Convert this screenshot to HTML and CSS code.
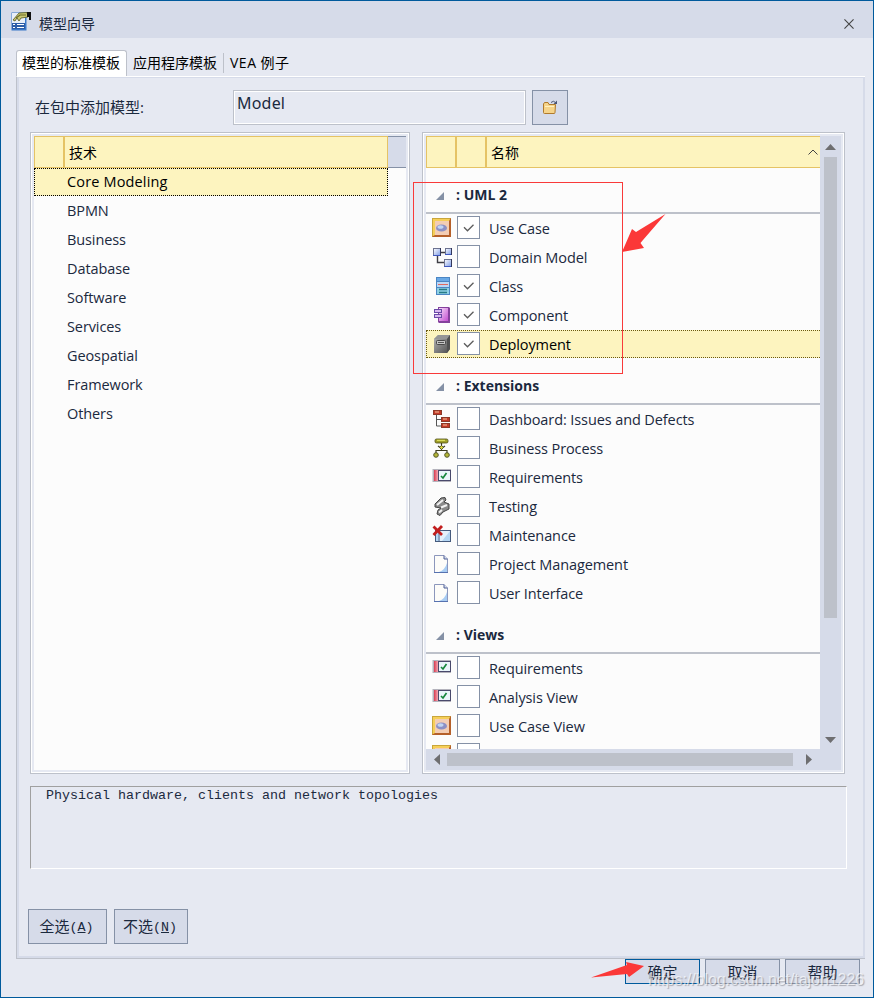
FILE: index.html
```html
<!DOCTYPE html>
<html lang="zh-CN">
<head>
    <meta charset="UTF-8">
    <meta name="viewport" content="width=device-width, initial-scale=1.0">
    <title>模型向导</title>
    <link rel="stylesheet" href="styles.css">
</head>
<body>
    <!-- icon set -->
    <svg class="defs" width="0" height="0">
        <defs>
            <linearGradient id="gSteel" x1="0" y1="0" x2="1" y2="1">
                <stop offset="0" stop-color="#b8b8b8"/><stop offset="1" stop-color="#4c4c4c"/>
            </linearGradient>
            <linearGradient id="gBlue" x1="0" y1="0" x2="1" y2="1">
                <stop offset="0" stop-color="#ffffff"/><stop offset="1" stop-color="#7d9be6"/>
            </linearGradient>
            <linearGradient id="gPink" x1="0" y1="0" x2="1" y2="1">
                <stop offset="0" stop-color="#f8dcfa"/><stop offset="1" stop-color="#c24fd0"/>
            </linearGradient>
            <linearGradient id="gRed" x1="0" y1="0" x2="1" y2="0">
                <stop offset="0" stop-color="#d93a50"/><stop offset="1" stop-color="#f2aab4"/>
            </linearGradient>
        </defs>
        <symbol id="usecase" viewBox="0 0 20 20">
            <rect width="19" height="19" fill="#c9a63c"/>
            <path d="M19 0V19H0L2 17H17V2z" fill="#b5602a"/>
            <path d="M1 1H18L17 3H3V17L1 18z" fill="#f6cf58"/>
            <rect x="3" y="3" width="14" height="14" fill="#f3cdb4"/>
            <ellipse cx="9.500" cy="10" rx="5.500" ry="3.600" fill="#8c90c4"/>
            <ellipse cx="8.500" cy="9" rx="3" ry="1.800" fill="#bfd4f3"/>
        </symbol>
        <symbol id="domain" viewBox="0 0 20 20">
            <path d="M8 5.500H13M5.500 9V15.500H12" fill="none" stroke="#3e3e44" stroke-width="1.400"/>
            <g fill="url(#gBlue)" stroke="#6c7290">
                <rect x="1.500" y="1.500" width="7" height="7"/>
                <rect x="13.500" y="1.500" width="6" height="6"/>
                <rect x="12.500" y="12.500" width="7" height="7"/>
            </g>
            <path d="M1 8.500H9M13 7.500H20M12 19.500H20" stroke="#3f58c0"/>
            <path d="M8.500 1V9M19.500 1V8M19.500 12V20" stroke="#34395c"/>
        </symbol>
        <symbol id="class" viewBox="0 0 20 20">
            <rect x="4" y="1" width="14" height="18" fill="#4b86c4"/>
            <rect x="5" y="2" width="12" height="3" fill="#6aa9e6"/>
            <rect x="5" y="6" width="12" height="5" fill="#bcd8f6"/>
            <rect x="5" y="12" width="12" height="6" fill="#8ed0e4"/>
            <path d="M6 8.500H16" stroke="#e06a62"/>
            <path d="M7 13.500H15M7 16.500H15" stroke="#277a86" stroke-width="1.300"/>
        </symbol>
        <symbol id="component" viewBox="0 0 20 20">
            <path d="M6 2H17L18 3V18H7L6 17z" fill="#84419c"/>
            <rect x="7" y="3" width="9" height="13" fill="url(#gPink)"/>
            <rect x="2.500" y="4.500" width="7" height="3" fill="#d8b8f0" stroke="#6a4aa8"/>
            <rect x="2.500" y="9.500" width="7" height="3" fill="#d8b8f0" stroke="#6a4aa8"/>
        </symbol>
        <symbol id="deployment" viewBox="0 0 20 20">
            <path d="M2 5L6 1H18V15L15 19H2z" fill="url(#gSteel)"/>
            <path d="M2 5L6 1H18L15 5z" fill="#969696"/>
            <path d="M15 5L18 1V15L15 19z" fill="#505050"/>
            <rect x="4.500" y="6.500" width="9" height="4" rx="1" fill="#c4c4c4" stroke="#484848"/>
            <path d="M6 8.500H12" stroke="#555"/>
        </symbol>
        <symbol id="tree" viewBox="0 0 20 20">
            <path d="M4.500 6V17H9M4.500 10.500H9" fill="none" stroke="#555"/>
            <g fill="#c43a28" stroke="#8c3a28">
                <rect x="1.500" y="1.500" width="8" height="4"/>
                <rect x="9.500" y="8.500" width="8" height="4"/>
                <rect x="9.500" y="14.500" width="8" height="4"/>
            </g>
            <path d="M3 3H7M11 10H15M11 16H15" stroke="#f3c6a0"/>
        </symbol>
        <symbol id="process" viewBox="0 0 20 20">
            <path d="M9.500 5V12M4 16V12.500H15V16M6 8L9.500 10.500L13 8" fill="none" stroke="#3c3c20" stroke-width="1.200"/>
            <rect x="3" y="1" width="13" height="4" rx="1.500" fill="#a0a028" stroke="#4c4c18" stroke-width=".8"/>
            <path d="M5 2.300H13" stroke="#e9ec6c"/>
            <path d="M9.500 7.500L11.500 9.500L9.500 11.500L7.500 9.500z" fill="#d8d63c" stroke="#4c4c18" stroke-width=".8"/>
            <circle cx="4" cy="17" r="2.300" fill="#b6b838" stroke="#555828"/>
            <circle cx="15" cy="17" r="2.300" fill="#b6b838" stroke="#555828"/>
        </symbol>
        <symbol id="require" viewBox="0 0 20 20">
            <rect x=".5" y="2" width="18.500" height="13" fill="#b4b3bc"/>
            <rect x="2" y="3" width="4" height="11" fill="url(#gRed)"/>
            <rect x="6.500" y="3.500" width="12" height="10" fill="#eaf5fb" stroke="#49496b"/>
            <path d="M9 9L11 11L14.500 6" fill="none" stroke="#15863c" stroke-width="1.700"/>
        </symbol>
        <symbol id="testing" viewBox="0 0 20 20">
            <path d="M3 8L9 2L13 1.500L14 4L12 6L17 8V13L11 16L8 19.500L5 18L6 14L9 12L3 11z" fill="#8a8a8a" stroke="#444"/>
            <path d="M5 9L11 4M9 11.500L15 9M7 16.500L10 14" stroke="#f2f2f2" stroke-width="2"/>
        </symbol>
        <symbol id="maint" viewBox="0 0 20 20">
            <rect x="3.500" y="5.500" width="15" height="11" fill="#b4d6f4" stroke="#455a7c"/>
            <path d="M18 6L10 16H8V6z" fill="#e4f1fc"/>
            <path d="M7 7V16" stroke="#64718d"/>
            <path d="M1.500 1.500L10 10M10 1L1.500 10" stroke="#c21e1e" stroke-width="2.800"/>
        </symbol>
        <symbol id="page" viewBox="0 0 20 20">
            <path d="M2.500 1.500H12L15.500 5V18.500H2.500z" fill="#fdfcf9" stroke="#8c97bc"/>
            <path d="M15 9V18H7Q13 16 15 9z" fill="#a9cdf3"/>
            <path d="M12 1.500V5H15.500" fill="#d7def0" stroke="#4f5e94"/>
            <path d="M2 18.500H16" stroke="#5672b0"/>
        </symbol>
        <symbol id="tick" viewBox="0 0 21 21">
            <path d="M6 10.300L9.500 13.800L15.500 7.800" fill="none" stroke="#5c5c5c" stroke-width="1.300"/>
        </symbol>
    </svg>

    <div class="window">
        <div class="titlebar">
            <svg class="app-icon" viewBox="0 0 20 19">
                <rect x=".5" y=".5" width="15" height="18" fill="#3a78c8"/>
                <rect x="1" y="1" width="13" height="10" fill="#e8eef8"/>
                <rect x="1" y="11" width="13" height="6" fill="#2c5ca8"/>
                <path d="M2 12.500H4M6 12.500H13M2 15.500H4M6 15.500H13" stroke="#fff"/>
                <path d="M2 8L8 1L16 .5L17 5L10 6L8 9L6 6L4 9z" fill="#c9c672" stroke="#55551c" stroke-width=".8"/>
                <path d="M5 6L9 3H15" fill="none" stroke="#6b6b24" stroke-width="1.200"/>
                <path d="M16 0H20V8H18V5H16z" fill="#111"/>
            </svg>
            <span class="title">模型向导</span>
            <svg class="close" viewBox="0 0 11 11"><path d="M.5 .5L10.500 10.500M10.500 .5L.5 10.500" stroke="#444" stroke-width="1.200"/></svg>
        </div>

        <div class="tabs">
            <div class="tab active">模型的标准模板</div>
            <div class="tab second">应用程序模板</div>
            <div class="tab vea">VEA 例子</div>
        </div>

        <div class="panel">
            <div class="form-row">
                <label>在包中添加模型:</label>
                <div class="field">Model</div>
                <button class="browse">
                    <svg viewBox="0 0 16 15">
                        <path d="M1.500 4V12.500Q1.500 13.500 2.500 13.500H12Q13 13.500 13 12.500L13.500 4.500H7L6 2.500H2.500z" fill="#f6d48a" stroke="#b07a2c"/>
                        <path d="M3 6.500H12" stroke="#fff2c0"/>
                        <path d="M9 2.500Q11.500 0 13.500 2.500" fill="none" stroke="#4c5674"/>
                        <path d="M15 .5V4H11.500z" fill="#4c5674"/>
                    </svg>
                </button>
            </div>

            <div class="lists">
                <div class="list tech">
                    <div class="head">
                        <div class="col first"></div>
                        <div class="col name">技术</div>
                        <div class="rest"></div>
                    </div>
                    <div class="item selected">Core Modeling</div>
                    <div class="item">BPMN</div>
                    <div class="item">Business</div>
                    <div class="item">Database</div>
                    <div class="item">Software</div>
                    <div class="item">Services</div>
                    <div class="item">Geospatial</div>
                    <div class="item">Framework</div>
                    <div class="item">Others</div>
                </div>

                <div class="list models">
                    <div class="main">
                        <div class="head">
                            <div class="col first"></div>
                            <div class="col second"></div>
                            <div class="col name">名称
                                <svg class="sort" viewBox="0 0 10 6"><path d="M.5 5.500L5 1L9.500 5.500" fill="none" stroke="#444"/></svg>
                            </div>
                        </div>
                        <div class="rows">
                            <div class="group"><i></i>: UML 2</div>
                            <div class="row"><svg class="ico"><use href="#usecase"/></svg><span class="check"><svg><use href="#tick"/></svg></span>Use Case</div>
                            <div class="row"><svg class="ico"><use href="#domain"/></svg><span class="check"></span>Domain Model</div>
                            <div class="row"><svg class="ico"><use href="#class"/></svg><span class="check"><svg><use href="#tick"/></svg></span>Class</div>
                            <div class="row"><svg class="ico"><use href="#component"/></svg><span class="check"><svg><use href="#tick"/></svg></span>Component</div>
                            <div class="row selected"><svg class="ico"><use href="#deployment"/></svg><span class="check"><svg><use href="#tick"/></svg></span>Deployment</div>

                            <div class="group"><i></i>: Extensions</div>
                            <div class="row"><svg class="ico"><use href="#tree"/></svg><span class="check"></span>Dashboard: Issues and Defects</div>
                            <div class="row"><svg class="ico"><use href="#process"/></svg><span class="check"></span>Business Process</div>
                            <div class="row"><svg class="ico"><use href="#require"/></svg><span class="check"></span>Requirements</div>
                            <div class="row"><svg class="ico"><use href="#testing"/></svg><span class="check"></span>Testing</div>
                            <div class="row"><svg class="ico"><use href="#maint"/></svg><span class="check"></span>Maintenance</div>
                            <div class="row"><svg class="ico"><use href="#page"/></svg><span class="check"></span>Project Management</div>
                            <div class="row"><svg class="ico"><use href="#page"/></svg><span class="check"></span>User Interface</div>

                            <div class="group"><i></i>: Views</div>
                            <div class="row"><svg class="ico"><use href="#require"/></svg><span class="check"></span>Requirements</div>
                            <div class="row"><svg class="ico"><use href="#require"/></svg><span class="check"></span>Analysis View</div>
                            <div class="row"><svg class="ico"><use href="#usecase"/></svg><span class="check"></span>Use Case View</div>
                            <div class="row"><svg class="ico"><use href="#usecase"/></svg><span class="check"></span></div>
                        </div>
                        <div class="hscroll">
                            <i class="arrow left"></i>
                            <div class="thumb"></div>
                            <i class="arrow right"></i>
                        </div>
                    </div>
                    <div class="vscroll">
                        <i class="arrow up"></i>
                        <div class="thumb"></div>
                        <i class="arrow down"></i>
                    </div>
                </div>
            </div>

            <div class="desc">Physical hardware, clients and network topologies</div>

            <div class="select-buttons">
                <button class="all">全选<span>(<u>A</u>)</span></button>
                <button class="none">不选<span>(<u>N</u>)</span></button>
            </div>
        </div>

        <div class="footer">
            <button class="default">确定</button>
            <button>取消</button>
            <button>帮助</button>
        </div>

        <!-- red marks over the dialog -->
        <svg class="marks" viewBox="0 0 874 998">
            <rect x="413.500" y="182.500" width="209" height="191" fill="none" stroke="#f93a3a"/>
            <path d="M665.500 214L636 232L632 229L622 252L644 248L640.500 243L643 240z" fill="#fb3838"/>
            <path d="M644 966L626 962L627 965L591 977.500L627 974L629 977z" fill="#fb3838"/>
        </svg>
        <div class="watermark">https://blog.csdn.net/tajon1226</div>
    </div>
</body>
</html>
```

FILE: styles.css
```css
* {
    box-sizing: border-box;
}
body {
    margin: 0;
    font-family: "Open Sans", "Noto Sans CJK SC", sans-serif;
    font-size: 14.5px;
    color: #1b293e;
}
.defs {
    position: absolute;
}
.window {
    position: relative;
    width: 874px;
    height: 998px;
    background: #e6e9f2;
    border: 1px solid #005a9c;
    overflow: hidden;
}
.titlebar {
    height: 37px;
    background: #d6dbe9;
    display: flex;
    align-items: center;
    padding: 0 19px 0 10px;
}
.app-icon {
    width: 20px;
    height: 19px;
    margin-top: 4px;
}
.title {
    font-family: "Noto Sans CJK SC", sans-serif;
    font-size: 14px;
    margin: 6px 0 0 8px;
    line-height: 20px;
}
.close {
    width: 10px;
    height: 10px;
    margin: 8px 0 0 auto;
}

/* tabs */
.tabs {
    display: flex;
    height: 38px;
    padding: 12px 0 0 15px;
    font-family: "Open Sans", "Noto Sans CJK SC", sans-serif;
    font-size: 14px;
    line-height: 25px;
    color: #000;
    white-space: nowrap;
}
.tab {
    height: 26px;
}
.tab.active {
    width: 111px;
    padding-left: 5px;
    background: #fff;
    border: 1px solid #bdc1ca;
    border-bottom: none;
    border-radius: 3px 3px 0 0;
    line-height: 23px;
}
.tab.second {
    width: 96px;
    padding-left: 6px;
}
.tab.vea {
    height: 20px;
    margin-top: 3px;
    padding-left: 6px;
    line-height: 19px;
    letter-spacing: 0.5px;
    border-left: 1px solid #bdc1ca;
}

/* tab page */
.panel {
    width: 849px;
    height: 883px;
    margin-left: 15px;
    border-top: 1px solid #fff;
    border-left: 1px solid #bdc1ca;
    border-bottom: 1px solid #bdc1ca;
    box-shadow: inset 2px 0 #d6dbe9, inset -2px 0 #d6dbe9, inset 0 -2px #d6dbe9, inset 0 1px #d6dbe9;
    padding: 13px 0 0 11px;
}
.form-row {
    display: flex;
    height: 35px;
    padding-left: 7px;
}
.form-row label {
    width: 198px;
    font-size: 15px;
    line-height: 34px;
}
.field {
    width: 293px;
    padding: 1px 3px;
    border: 1px solid #bdc1ca;
    box-shadow: inset 0 0 0 1px #fff;
    font-family: "Noto Sans", sans-serif;
    font-size: 16px;
    line-height: 23px;
    letter-spacing: 0.2px;
}
button {
    background: #d6dbe9;
    border: 1px solid #8591a6;
    padding: 0;
    color: #1b293e;
    font-family: "Noto Sans CJK SC", sans-serif;
    font-size: 15px;
}
.browse {
    width: 36px;
    margin-left: 6px;
    display: flex;
    align-items: center;
    justify-content: center;
}
.browse svg {
    width: 16px;
    height: 15px;
}

/* lists */
.lists {
    display: flex;
    gap: 12px;
    margin: 7px 0 0 2px;
    height: 642px;
}
.list {
    border: 1px solid #bdc1ca;
    outline: 1px solid #fff;
    outline-offset: -2px;
    padding: 3px;
}
.tech {
    width: 380px;
    background: #fcfcfc content-box;
}
.models {
    width: 423px;
    display: flex;
}
.head {
    display: flex;
    height: 32px;
    color: #000;
    font-size: 14px;
    line-height: 31px;
}
.col {
    background: #fdf4bf;
    border: 1px solid #e5c365;
}
.col.first,
.col.second {
    width: 30px;
}
.tech .name {
    width: 324px;
    padding-left: 4px;
}
.tech .rest {
    flex: 1;
    background: #d6dbe9;
    border: solid #8591a6;
    border-width: 1px 0;
}
.models .name {
    flex: 1;
    border-right: none;
    padding: 0 2px 0 4px;
    display: flex;
    align-items: center;
    justify-content: space-between;
}
.sort {
    width: 10px;
    height: 6px;
}
.item {
    height: 29px;
    padding-left: 33px;
    line-height: 28px;
    letter-spacing: -0.1px;
}
.item.selected {
    width: 354px;
    height: 28px;
    margin-bottom: 1px;
    padding-left: 32px;
    line-height: 26px;
    letter-spacing: 0.15px;
    background: #fdf4bf;
    border: 1px dotted #000;
    color: #000;
}
.main {
    width: 394px;
    display: flex;
    flex-direction: column;
}
.rows {
    height: 581px;
    overflow: hidden;
    background: #fcfcfc;
}
.group {
    display: flex;
    align-items: center;
    height: 46px;
    padding: 8px 0 0 10px;
    border-bottom: 2px solid #bdc1ca;
    font-weight: bold;
    font-size: 14px;
}
.group i {
    width: 8px;
    height: 8px;
    margin: 4px 12px 0 0;
    background: #8591a6;
    clip-path: polygon(100% 0, 100% 100%, 0 100%);
}
.row {
    display: flex;
    height: 29px;
    padding-left: 6px;
    line-height: 29px;
    letter-spacing: -0.1px;
}
.row.selected {
    background: linear-gradient(#fdf4bf, #fdf4bf) 0 0 / 100% 28px no-repeat;
    color: #000;
    position: relative;
}
.row.selected::after {
    content: "";
    position: absolute;
    inset: 0 0 1px 0;
    border: 1px dotted #6b5a10;
    border-right: none;
}
.ico {
    width: 20px;
    height: 20px;
    margin-top: 4px;
}
.check {
    width: 23px;
    height: 23px;
    margin: 2px 9px 0 5px;
    background: #fff;
    border: 1px solid #8591a6;
    display: flex;
}
.check svg {
    width: 21px;
    height: 21px;
}

/* scrollbars */
.vscroll,
.hscroll {
    display: flex;
    background: #d6dbe9;
    align-items: center;
}
.vscroll {
    width: 21px;
    flex-direction: column;
    padding-top: 8px;
}
.hscroll {
    height: 21px;
    padding-left: 8px;
}
.thumb {
    background: #bdc1ca;
}
.vscroll .thumb {
    width: 13px;
    height: 461px;
    margin: 7px 0 119px;
}
.hscroll .thumb {
    width: 346px;
    height: 13px;
    margin: 0 13px 0 7px;
}
.arrow {
    background: #6e6e70;
}
.up {
    width: 11px;
    height: 6px;
    clip-path: polygon(50% 0, 100% 100%, 0 100%);
}
.down {
    width: 11px;
    height: 6px;
    clip-path: polygon(0 0, 100% 0, 50% 100%);
}
.left {
    width: 6px;
    height: 11px;
    clip-path: polygon(100% 0, 100% 100%, 0 50%);
}
.right {
    width: 6px;
    height: 11px;
    clip-path: polygon(0 0, 100% 50%, 0 100%);
}

.desc {
    width: 817px;
    height: 83px;
    margin: 12px 0 0 2px;
    padding-left: 15px;
    border: 1px solid;
    border-color: #a0a0a0 #fff #fff #a0a0a0;
    font-family: "Liberation Mono", monospace;
    font-size: 13.333px;
    line-height: 18px;
}
.select-buttons {
    display: flex;
    gap: 7px;
    margin-top: 40px;
    height: 35px;
}
.select-buttons button {
    white-space: nowrap;
    padding-right: 2px;
    line-height: 31px;
}
.select-buttons span {
    font-family: "Liberation Mono", monospace;
    font-size: 13.333px;
    vertical-align: 1px;
}
.all {
    width: 79px;
}
.none {
    width: 74px;
}
.footer {
    display: flex;
    justify-content: flex-end;
    gap: 5px;
    padding-right: 13px;
}
.footer button {
    width: 75px;
    height: 25px;
    line-height: 21px;
}
.footer .default {
    border-color: #005a9c;
}

/* overlay */
.marks {
    position: absolute;
    left: -1px;
    top: -1px;
    width: 874px;
    height: 998px;
}
.watermark {
    position: absolute;
    left: 647px;
    top: 969px;
    font-family: "Liberation Sans", sans-serif;
    font-size: 16px;
    line-height: 20px;
    letter-spacing: -0.06px;
    color: rgba(255, 255, 255, 0.65);
    text-shadow: 1px 1px 1px rgba(90, 90, 100, 0.45);
}
```
